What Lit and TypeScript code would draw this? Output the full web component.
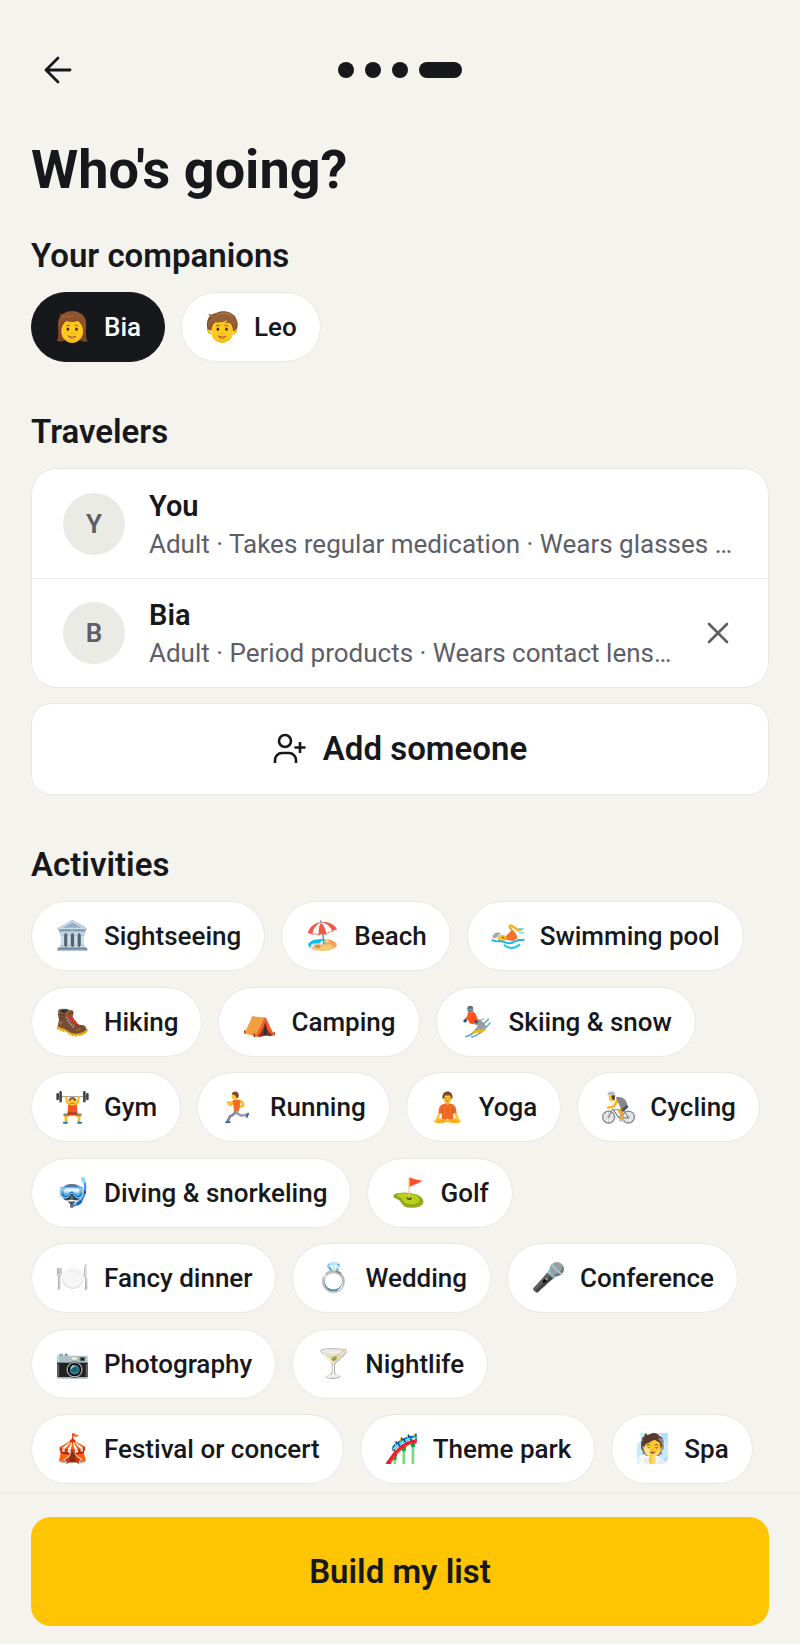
import { LitElement, html, css, svg, nothing } from 'lit';
import { customElement, property, state } from 'lit/decorators.js';
import { classMap } from 'lit/directives/class-map.js';

interface Chip {
  icon: unknown;
  label: string;
}

interface Traveler {
  name: string;
  detail: string;
  removable: boolean;
}

const picture = (content: unknown) => html`
  <svg viewBox="0 0 100 100" fill="none" stroke-linecap="round" stroke-linejoin="round">${content}</svg>
`;

const face = svg`
  <ellipse cx="49" cy="61" rx="33" ry="36" fill="#ffc81f" />
  <path d="M20 76c8 24 50 24 58 0-8 12-20 15-29 15s-21-3-29-15z" fill="#f7a916" />
  <path d="M31 45c3-3 7-3 10-1M57 44c3-2 7-2 10 1" stroke="#8a5420" stroke-width="3" />
  <ellipse cx="36" cy="55" rx="4" ry="5" fill="#4a2c14" />
  <ellipse cx="62" cy="55" rx="4" ry="5" fill="#4a2c14" />
  <path d="M38 76c5 4 17 4 22 0-3 9-19 9-22 0z" fill="#fff" stroke="#a0551a" stroke-width="3" />
  <path d="M46 67c2 1 4 1 6 0" stroke="#d98a12" stroke-width="2" />
`;

const adult = picture(svg`
  <path d="M2 89C13 78 0 48 10 22 26-5 76-4 88 25c9 26-3 50 8 66-8 4-18 1-24-5H28c-6 7-17 9-26 3z" fill="#7d4627" />
  ${face}
  <path d="M14 58C11 42 20 28 32 31c16 4 30 3 37-3 9 6 15 17 14 33 12-16 10-43-6-52C52-9 17 2 9 24c-4 12-1 25 5 34z" fill="#8f5330" />
  <path d="M12 10c11 9 26 10 40 4" stroke="#a9683f" stroke-width="3" />
`);

const child = picture(svg`
  <path d="M5 58C-2 30 8 9 31 6 62-8 94 12 96 38c0 10-2 17-6 23z" fill="#7d4627" />
  <path d="M9 55c-8 3-3 16 7 15M89 55c8 3 3 16-7 15" fill="#fbb71c" stroke="#f3a516" stroke-width="2" />
  ${face}
  <path d="M12 58c2-14 5-20 14-24 18 3 30-1 39-9-2 7-5 10-9 12 13 0 26-5 29 22 8-9 13-33 1-45C68-4 40-3 27 11 21 13 12 12 8 7c0 7 4 12 9 14C3 28 4 46 12 58z" fill="#966039" />
  <path d="M31 15C46 5 65 5 76 14" stroke="#b27a4d" stroke-width="3" />
`);

const swimmer = picture(svg`
  <path d="M60 31l-6-9c-2-4 2-7 7-4l19 13 9-2" stroke="#f9b21f" stroke-width="7" />
  <path d="M34 58 60 30c9 4 15 13 17 25l-14 9z" fill="#f5712c" />
  <path d="M18 52c2-9 20-11 25 0 4 12-16 17-25 9z" fill="#fcbf2d" />
  <path d="M2 55C0 41 17 33 28 42c-8 2-9 8-15 12z" fill="#a4a9ae" />
  <path d="M31 52l6 3" stroke="#4e3420" stroke-width="3" />
  <path d="M2 61c12 9 23-1 34 5s22 6 35-2c9-5 17-2 25-4" stroke="#20b4e6" stroke-width="6" />
  <path d="M38 77c12 9 30 12 45-2" stroke="#28c0ee" stroke-width="6" />
  <path d="M82 26c4 4 7-1 13 1M84 38c3 3 8-1 12 1" stroke="#5fd0f2" stroke-width="4" />
`);

const skier = picture(svg`
  <path d="M14 96c20-4 41-26 69-53M32 97c22-3 38-22 56-43" stroke="#4f9fce" stroke-width="4" />
  <path d="M30 51c17 3 24 7 30 11L46 78M46 46c13 5 19 10 24 18L60 80" stroke="#9a9ea3" stroke-width="11" />
  <path d="M38 83l14-5M56 81l14-6" stroke="#e6b60b" stroke-width="8" />
  <path d="M22 20c15-7 27 7 28 29L33 58C21 53 16 36 22 20z" fill="#ff4d1c" />
  <path d="M30 30c-9 8-14 11-17 17" stroke="#ff5a25" stroke-width="8" />
  <path d="M12 48h1M46 51h1" stroke="#26566b" stroke-width="10" />
  <path d="M46 51 70 42" stroke="#636973" stroke-width="2" />
  <path d="M20 17c0 7 13 10 18 2l-2-9z" fill="#d99438" />
  <circle cx="28" cy="11" r="9" fill="#626973" />
  <path d="M21 14h13" stroke="#35b8e8" stroke-width="5" />
`);

const lifter = picture(svg`
  <path d="M7 17h86" stroke="#92989e" stroke-width="3" />
  <path d="M5 10v14M14 4v27M86 4v27M95 10v14" stroke="#42464a" stroke-width="8" />
  <path d="M31 19l3 16 10 8h12l10-8 3-16" stroke="#fcb91d" stroke-width="7" />
  <path d="M40 72 29 78l2 12M60 72l11 6-2 12" stroke="#fcb91d" stroke-width="8" />
  <path d="M37 42h26l3 33H34z" fill="#f15726" />
  <path d="M26 72l8 0M66 72l8 0" stroke="#7f858b" stroke-width="8" />
  <path d="M24 96h9M67 96h9" stroke="#1679ba" stroke-width="6" />
  <path d="M38 68h24" stroke="#a83521" stroke-width="5" />
  <ellipse cx="50" cy="31" rx="11" ry="13" fill="#ffc52b" />
  <path d="M38 31c0-16 24-16 24 0-8-1-11-7-14-8-2 5-5 7-10 8z" fill="#80512e" />
  <path d="M46 37h8" stroke="#94451c" stroke-width="2" />
`);

const runner = picture(svg`
  <path d="M52 29c8 0 14 9 12 16l-14 4" stroke="#fcb41d" stroke-width="7" />
  <path d="M31 35l-14-1M34 32l-6 11-8-3" stroke="#fcb41d" stroke-width="6" />
  <path d="M42 57c-4 14-8 17-17 19L17 91" stroke="#7f868d" stroke-width="8" />
  <path d="M48 57l-4 10 16 8 13-3" stroke="#9aa0a6" stroke-width="8" />
  <path d="M13 95l10-1M75 78l4-9" stroke="#2767bb" stroke-width="6" />
  <path d="M33 28c10-5 22-2 23 6l-4 24c-6 4-12 3-16 0z" fill="#f36d25" />
  <ellipse cx="38" cy="16" rx="9" ry="10" fill="#ffc42b" />
  <path d="M29 10C31-2 51-2 51 12c0 9-6 13-8 7-1-6-6-7-14-9z" fill="#7a4c2c" />
`);

const yoga = picture(svg`
  <path d="M10 90c10-12 27-6 40-2 13-4 30-10 40 2 1 10-22 10-40 4-18 6-41 6-40-4z" fill="#fcb827" />
  <path d="M28 62 19 84M72 62l9 22" stroke="#fcc233" stroke-width="7" />
  <path d="M32 42c8-5 28-5 36 0 8 5 9 15 9 25l-10 1v17H33V68l-10-1c0-10 1-20 9-25z" fill="#f06a26" />
  <path d="M33 68l2-15M67 68l-2-15" stroke="#c94d18" stroke-width="2" />
  <path d="M22 94l24-8M78 94l-24-8" stroke="#de8914" stroke-width="2" />
  <path d="M44 29h12v10c-3 5-9 5-12 0z" fill="#efa71c" />
  <ellipse cx="50" cy="21" rx="13" ry="16" fill="#ffc72f" />
  <path d="M35 24C30-6 70-6 65 24c-4-2-6-7-8-11-7 1-10 1-14 0-1 5-4 10-8 11z" fill="#75492c" />
  <path d="M43 22h4M54 22h4M46 30h7" stroke="#74421e" stroke-width="2" />
`);

const cyclist = picture(svg`
  <g stroke="#858b90">
    <circle cx="20" cy="79" r="18" stroke-width="4" fill="#f0f0ef" />
    <circle cx="80" cy="79" r="18" stroke-width="4" fill="#f0f0ef" />
    <path d="M20 61v36M2 79h36M7 66l26 26M33 66 7 92M80 61v36M62 79h36M67 66l26 26M93 66 67 92" stroke-width="1" />
    <path d="M20 79 32 55l20 27h28L66 57H34l18 25 14-25" stroke="#70767b" stroke-width="3" />
  </g>
  <path d="M64 49 53 62l10 11-4 13" stroke="#f6a629" stroke-width="9" />
  <path d="M55 89h9" stroke="#b9bec2" stroke-width="7" />
  <path d="M47 28 36 47l-17 3" stroke="#fcb51e" stroke-width="8" />
  <path d="M42 20c18-6 36 7 36 29L58 55 49 35z" fill="#85898e" />
  <path d="M75 48 63 58" stroke="#50555a" stroke-width="9" />
  <path d="M20 14h19v12c-7 9-18 6-18-2z" fill="#ffc22d" />
  <path d="M28 13h12l-3 17-7-7z" fill="#553d2d" />
  <path d="M16 14C15-3 38-4 40 12z" fill="#c4c9cc" />
  <path d="M22 8l14-2" stroke="#858b90" stroke-width="2" />
`);

const COMPANIONS: Chip[] = [
  { icon: adult, label: 'Bia' },
  { icon: child, label: 'Leo' },
];

const TRAVELERS: Traveler[] = [
  {
    name: 'You',
    detail: 'Adult · Takes regular medication · Wears glasses · Wears contact lenses',
    removable: false,
  },
  {
    name: 'Bia',
    detail: 'Adult · Period products · Wears contact lenses',
    removable: true,
  },
];

const ACTIVITIES: Chip[] = [
  { icon: '🏛️', label: 'Sightseeing' },
  { icon: '🏖️', label: 'Beach' },
  { icon: swimmer, label: 'Swimming pool' },
  { icon: '🥾', label: 'Hiking' },
  { icon: '⛺', label: 'Camping' },
  { icon: skier, label: 'Skiing & snow' },
  { icon: lifter, label: 'Gym' },
  { icon: runner, label: 'Running' },
  { icon: yoga, label: 'Yoga' },
  { icon: cyclist, label: 'Cycling' },
  { icon: '🤿', label: 'Diving & snorkeling' },
  { icon: '⛳', label: 'Golf' },
  { icon: '🍽️', label: 'Fancy dinner' },
  { icon: '💍', label: 'Wedding' },
  { icon: '🎤', label: 'Conference' },
  { icon: '📷', label: 'Photography' },
  { icon: '🍸', label: 'Nightlife' },
  { icon: '🎪', label: 'Festival or concert' },
  { icon: '🎢', label: 'Theme park' },
  { icon: '🧖', label: 'Spa' },
];

@customElement('choice-chip')
class ChoiceChip extends LitElement {
  @property({ attribute: false }) icon: unknown = '';
  @property() label = '';
  @property({ type: Boolean }) selected = false;

  static styles = css`
    :host {
      display: block;
    }

    button {
      display: flex;
      align-items: center;
      gap: 15px;
      height: 70px;
      padding: 0 23px 0 24px;
      border: 1px solid #e9e8e3;
      border-radius: 35px;
      background: #fff;
      color: #17181c;
      font: 500 26px/32px Roboto, sans-serif;
      white-space: nowrap;
      cursor: pointer;
    }

    button.selected {
      background: #17181c;
      border-color: #17181c;
      color: #fff;
    }

    .icon {
      display: flex;
      justify-content: center;
      align-items: center;
      width: 33px;
      height: 33px;
      font-size: 28px;
    }

    .icon svg {
      flex: none;
      width: 33px;
      height: 33px;
      overflow: visible;
    }
  `;

  render() {
    return html`
      <button
        type="button"
        class=${classMap({ selected: this.selected })}
        aria-pressed=${this.selected ? 'true' : 'false'}
      >
        <span class="icon" aria-hidden="true">${this.icon}</span>
        <span>${this.label}</span>
      </button>
    `;
  }
}

@customElement('app-root')
class AppRoot extends LitElement {
  @state() private companions = ['Bia'];
  @state() private activities: string[] = [];

  static styles = css`
    :host {
      display: flex;
      flex-direction: column;
      min-height: 100vh;
      box-sizing: border-box;
      background: #f4f3ee;
      color: #17181c;
      font-family: Roboto, sans-serif;
    }

    * {
      box-sizing: border-box;
    }

    h1,
    h2,
    p,
    ul {
      margin: 0;
      padding: 0;
    }

    button {
      border: none;
      background: none;
      color: inherit;
      font: inherit;
      cursor: pointer;
    }

    header {
      display: grid;
      grid-template-columns: 1fr auto 1fr;
      align-items: center;
      padding: 43px 31px 0;
    }

    .back {
      display: flex;
      justify-self: start;
      padding: 11px;
    }

    .steps {
      display: flex;
      gap: 11px;
    }

    .step {
      width: 16px;
      height: 16px;
      border-radius: 8px;
      background: #17181c;
    }

    .step.current {
      width: 43px;
    }

    main {
      flex: 1;
      display: flex;
      flex-direction: column;
      gap: 50px;
      padding: 41px 31px 8px;
    }

    h1 {
      margin-bottom: 34px;
      font-size: 54px;
      line-height: 64px;
      font-weight: 700;
    }

    h2 {
      margin-bottom: 16px;
      font-size: 33px;
      line-height: 40px;
      font-weight: 600;
    }

    .chips {
      display: flex;
      flex-wrap: wrap;
      column-gap: 16px;
      row-gap: 15px;
    }

    .activities {
      flex: 1;
      display: flex;
      flex-direction: column;
    }

    .activities .chips {
      flex: 1;
      align-content: space-between;
    }

    .card {
      border: 1px solid #e9e8e3;
      border-radius: 26px;
      background: #fff;
      list-style: none;
    }

    .traveler {
      display: flex;
      align-items: center;
      gap: 24px;
      height: 109px;
      padding: 0 32px 0 31px;
    }

    .traveler + .traveler {
      border-top: 1px solid #e9e8e3;
    }

    .avatar {
      flex: none;
      display: grid;
      place-items: center;
      width: 62px;
      height: 62px;
      border-radius: 50%;
      background: #ebebe5;
      color: #5d5e67;
      font-size: 26px;
      font-weight: 600;
    }

    .about {
      flex: 1;
      min-width: 0;
    }

    .name {
      font-size: 29px;
      line-height: 40px;
      font-weight: 600;
    }

    .detail {
      overflow: hidden;
      color: #5d5e67;
      font-size: 26px;
      line-height: 36px;
      white-space: nowrap;
      text-overflow: ellipsis;
    }

    .remove {
      display: flex;
      padding: 6px;
      color: #5d5e67;
    }

    .add {
      display: flex;
      justify-content: center;
      align-items: center;
      gap: 16px;
      width: 100%;
      height: 92px;
      margin-top: 15px;
      border: 1px solid #e9e8e3;
      border-radius: 20px;
      background: #fff;
      font-size: 33px;
      line-height: 40px;
      font-weight: 600;
    }

    footer {
      position: sticky;
      bottom: 0;
      padding: 24px 31px 18px;
      border-top: 1px solid #e9e8e3;
      background: #f4f3ee;
    }

    .build {
      display: block;
      width: 100%;
      height: 109px;
      border-radius: 20px;
      background: #ffc502;
      font-size: 33px;
      line-height: 40px;
      font-weight: 600;
    }
  `;

  private toggle(list: string[], label: string) {
    return list.includes(label) ? list.filter(l => l !== label) : [...list, label];
  }

  private renderTraveler(t: Traveler) {
    return html`
      <li class="traveler">
        <span class="avatar" aria-hidden="true">${t.name[0]}</span>
        <div class="about">
          <p class="name">${t.name}</p>
          <p class="detail">${t.detail}</p>
        </div>
        ${t.removable
          ? html`
              <button type="button" class="remove" aria-label="Remove ${t.name}">
                <svg width="24" height="24" viewBox="0 0 24 24" fill="none" stroke="currentColor" stroke-width="2.6" stroke-linecap="round">
                  <path d="M3 3l18 18M21 3L3 21" />
                </svg>
              </button>
            `
          : nothing}
      </li>
    `;
  }

  render() {
    return html`
      <header>
        <button type="button" class="back" aria-label="Back">
          <svg width="32" height="32" viewBox="0 0 32 32" fill="none" stroke="currentColor" stroke-width="2.8" stroke-linecap="round" stroke-linejoin="round">
            <path d="M28 16H4M16 4 4 16l12 12" />
          </svg>
        </button>
        <div class="steps" role="img" aria-label="Step 4 of 4">
          <span class="step"></span>
          <span class="step"></span>
          <span class="step"></span>
          <span class="step current"></span>
        </div>
      </header>

      <main>
        <section>
          <h1>Who's going?</h1>
          <h2>Your companions</h2>
          <div class="chips">
            ${COMPANIONS.map(c => html`
              <choice-chip
                .icon=${c.icon}
                .label=${c.label}
                .selected=${this.companions.includes(c.label)}
                @click=${() => { this.companions = this.toggle(this.companions, c.label); }}
              ></choice-chip>
            `)}
          </div>
        </section>

        <section>
          <h2>Travelers</h2>
          <ul class="card">
            ${TRAVELERS.map(t => this.renderTraveler(t))}
          </ul>
          <button type="button" class="add">
            <svg width="34" height="32" viewBox="0 0 34 32" fill="none" stroke="currentColor" stroke-width="2.6">
              <circle cx="12" cy="8" r="6" />
              <path d="M2 30v-3a7 7 0 0 1 7-7h7a7 7 0 0 1 7 7v3M27 9v11M21.500 14.500h11" />
            </svg>
            <span>Add someone</span>
          </button>
        </section>

        <section class="activities">
          <h2>Activities</h2>
          <div class="chips">
            ${ACTIVITIES.map(a => html`
              <choice-chip
                .icon=${a.icon}
                .label=${a.label}
                .selected=${this.activities.includes(a.label)}
                @click=${() => { this.activities = this.toggle(this.activities, a.label); }}
              ></choice-chip>
            `)}
          </div>
        </section>
      </main>

      <footer>
        <button type="button" class="build">Build my list</button>
      </footer>
    `;
  }
}
